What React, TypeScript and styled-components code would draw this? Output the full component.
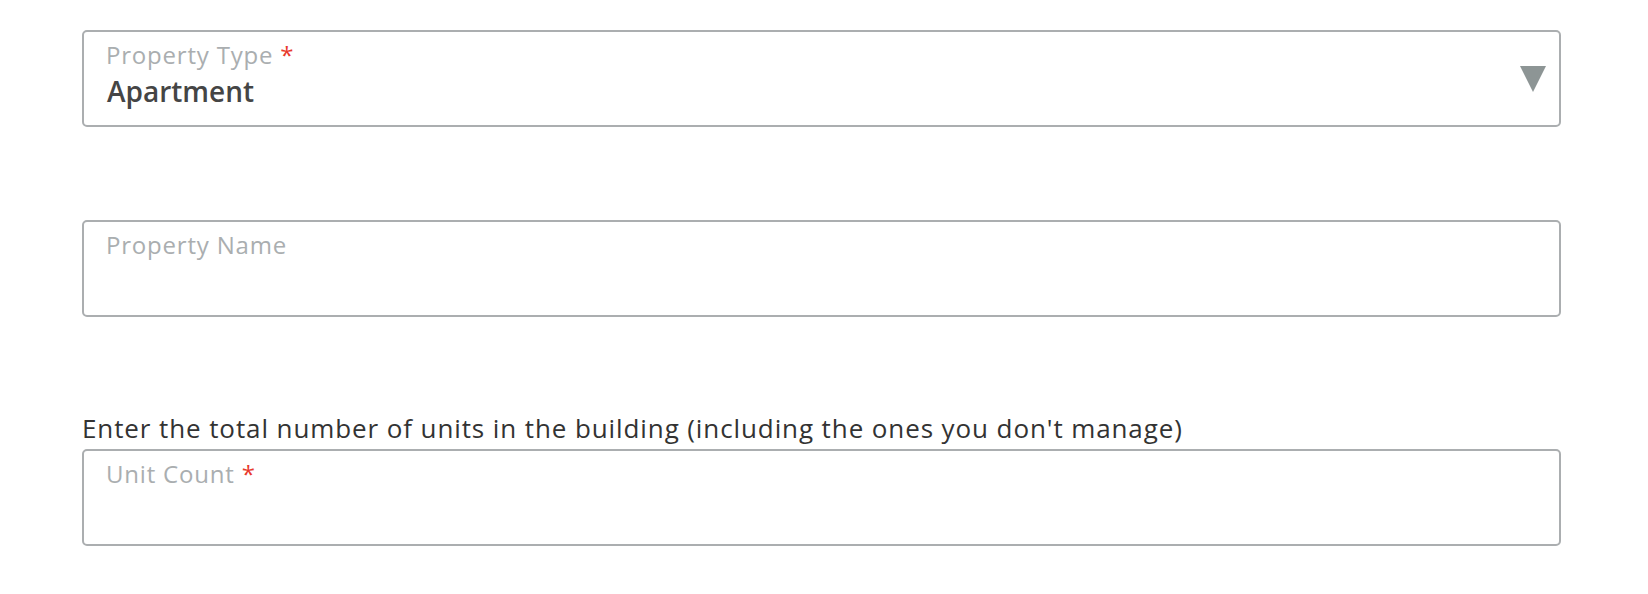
import React, { FC } from 'react';
import styled, { createGlobalStyle } from 'styled-components';

const GlobalStyle = createGlobalStyle`
  html, body { margin: 0; padding: 0; background: #ffffff; }
  body { font-family: "Open Sans", "Liberation Sans", sans-serif; }
`;

const Page = styled.div`
  display: flex;
  flex-direction: column;
  gap: 93px;
  padding: 30px 0 0 82px;
  width: 1479px;
`;

const Group = styled.div`
  display: flex;
  flex-direction: column;
`;

const Hint = styled.p`
  margin: 0 0 3px 0;
  font-size: 26px;
  line-height: 36px;
  letter-spacing: 0.9px;
  color: #333333;
`;

const Box = styled.div`
  box-sizing: border-box;
  height: 97px;
  display: flex;
  align-items: center;
  border: 2px solid #abaeb0;
  border-radius: 5px;
  padding: 0 13px 0 22px;
`;

const Inner = styled.div`
  flex: 1;
  align-self: flex-start;
  padding-top: 8px;
  display: flex;
  flex-direction: column;
`;

const Label = styled.span`
  font-size: 24px;
  line-height: 30px;
  letter-spacing: 0.8px;
  color: #aaaeb0;
`;

const Req = styled.span`
  color: #e8392d;
`;

const Value = styled.span`
  margin-top: 4px;
  font-size: 28px;
  line-height: 34px;
  font-weight: 600;
  color: #454545;
  padding-left: 1px;
`;

const Arrow = styled.svg`
  width: 26px;
  height: 26px;
  flex: none;
`;

interface FieldProps {
  label: string;
  required?: boolean;
  value?: string;
  select?: boolean;
}

const Field: FC<FieldProps> = ({ label, required, value, select }) => (
  <Box>
    <Inner>
      <Label>
        {label}
        {required && <Req> *</Req>}
      </Label>
      {value && <Value>{value}</Value>}
    </Inner>
    {select && (
      <Arrow viewBox="0 0 26 26">
        <polygon points="0,0 26,0 13,26" fill="#8d9595" />
      </Arrow>
    )}
  </Box>
);

const App: FC = () => {
  return (
    <>
      <GlobalStyle />
      <Page>
        <Group>
          <Field label="Property Type" required value="Apartment" select />
        </Group>
        <Group>
          <Field label="Property Name" />
        </Group>
        <Group>
          <Hint>Enter the total number of units in the building (including the ones you don't manage)</Hint>
          <Field label="Unit Count" required />
        </Group>
      </Page>
    </>
  );
};

export default App;
